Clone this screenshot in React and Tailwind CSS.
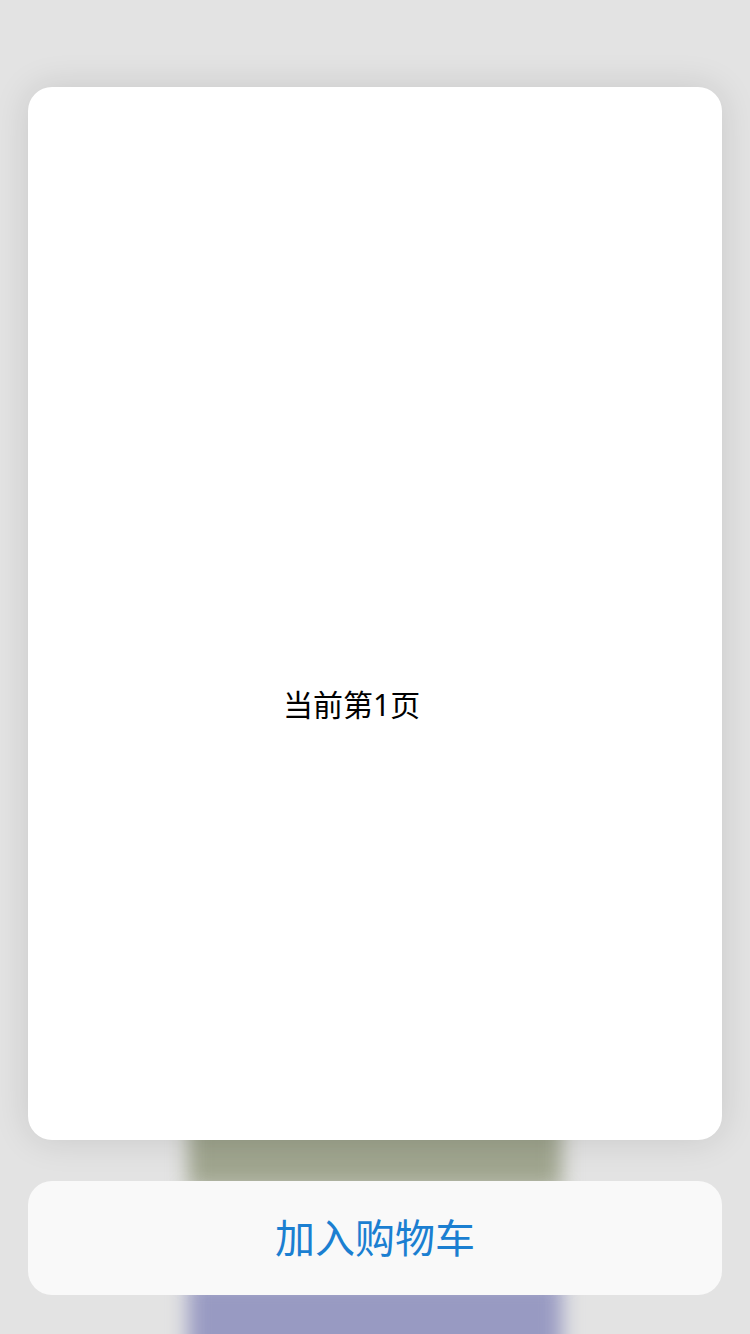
export default function App() {
  return (
    <div
      className="relative w-[750px] h-[1334px] overflow-hidden bg-[#e3e3e3]"
      style={{ fontFamily: '"Noto Sans", "Noto Sans CJK SC", sans-serif' }}
    >
      {/* Blurred page behind the popup */}
      <div className="absolute inset-0 blur-[10px]">
        <div className="absolute left-[188px] top-[1000px] w-[374px] h-[190px] bg-gradient-to-b from-[#8d957d] to-[#a3a892]" />
        <div className="absolute left-[188px] top-[1280px] w-[374px] h-[80px] bg-[#989ac2]" />
      </div>

      {/* Popup */}
      <div className="relative flex flex-col px-[28px] pt-[87px]">
        <div className="h-[1053px] rounded-[24px] bg-white shadow-[0_0_36px_rgba(0,0,0,0.12)] pt-[599px] pl-[255px]">
          <span className="text-[30px] leading-[38px] text-black">当前第1页</span>
        </div>
        <button className="mt-[41px] h-[114px] rounded-[24px] bg-[#f9f9f9] flex items-center justify-center text-[40px] text-[#1b7fd1]">
          加入购物车
        </button>
      </div>
    </div>
  )
}
